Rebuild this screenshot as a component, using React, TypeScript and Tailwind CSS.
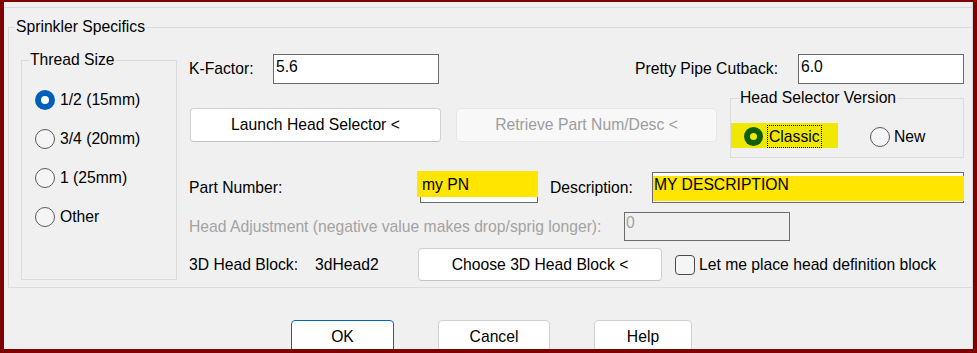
import React from "react";

function Radio({ checked, label }: { checked?: boolean; label: string }) {
  return (
    <div className="flex h-[39px] items-center">
      {checked ? (
        <div className="flex h-[20px] w-[20px] items-center justify-center rounded-full bg-[#005fb8]">
          <div className="h-[8px] w-[8px] rounded-full bg-white" />
        </div>
      ) : (
        <div className="h-[20px] w-[20px] rounded-full border border-[#5a5a5a] bg-[#f5f5f5]" />
      )}
      <span className="ml-[5px] leading-[18px]">{label}</span>
    </div>
  );
}

function Box({
  w,
  h,
  children,
  className = "",
}: {
  w: string;
  h: string;
  children?: React.ReactNode;
  className?: string;
}) {
  return (
    <div className={`${w} ${h} relative shrink-0 border border-[#6b6b6b] ${className}`}>{children}</div>
  );
}

export default function App() {
  return (
    <div className="h-[353px] w-[977px] bg-[#7f0000] pb-[4px] pl-[4px] pr-[4px] pt-[2px] font-['Liberation_Sans',Arial,sans-serif] text-[15.7px] text-black">
      <div className="flex h-full flex-col overflow-hidden border-r border-[#d6d6d6] bg-[#f0f0f0]">
        <div className="mt-[5px] h-px shrink-0 bg-[#dadada]" />

        {/* Sprinkler Specifics group */}
        <div className="relative ml-[4px] mt-[19px] h-[261px] shrink-0 border border-r-0 border-[#dcdcdc]">
          <span className="absolute -top-[10px] left-[6px] bg-[#f0f0f0] px-px leading-[18px]">
            Sprinkler Specifics
          </span>
          <div className="flex">
            {/* Thread Size */}
            <div className="relative ml-[12px] mt-[32px] h-[220px] w-[156px] shrink-0 border border-[#dcdcdc]">
              <span className="absolute -top-[10px] left-[7px] bg-[#f0f0f0] px-px leading-[18px]">
                Thread Size
              </span>
              <div className="flex flex-col pl-[13px] pt-[19px]">
                <Radio checked label="1/2 (15mm)" />
                <Radio label="3/4 (20mm)" />
                <Radio label="1 (25mm)" />
                <Radio label="Other" />
              </div>
            </div>

            {/* Right column */}
            <div className="ml-[12px] flex w-[775px] shrink-0 flex-col pt-[26px]">
              {/* Row 1 */}
              <div className="flex h-[30px] items-center">
                <span className="w-[84px] shrink-0 leading-[18px]">K-Factor:</span>
                <Box w="w-[166px]" h="h-[30px]" className="bg-white px-[2px] pt-[3px] leading-[18px]">
                  5.6
                </Box>
                <div className="flex-1" />
                <span className="leading-[18px]">Pretty Pipe Cutback:</span>
                <Box w="w-[166px]" h="h-[30px]" className="ml-[20px] bg-white px-[2px] pt-[3px] leading-[18px]">
                  6.0
                </Box>
              </div>

              {/* Row 2 */}
              <div className="mt-[14px] flex h-[60px] items-start">
                <button className="ml-px mt-[10px] h-[34px] w-[251px] shrink-0 rounded-[4px] border border-[#d0d0d0] border-b-[#c2c2c2] bg-white leading-[18px]">
                  Launch Head Selector &lt;
                </button>
                <button className="ml-[15px] mt-[10px] h-[34px] w-[261px] shrink-0 rounded-[4px] border border-[#e6e6e6] bg-[#f8f8f8] leading-[18px] text-[#9d9d9d]">
                  Retrieve Part Num/Desc &lt;
                </button>
                <div className="relative ml-[13px] h-[60px] w-[234px] shrink-0 border border-[#dcdcdc]">
                  <span className="absolute -top-[10px] left-[8px] bg-[#f0f0f0] px-px leading-[18px]">
                    Head Selector Version
                  </span>
                  <div className="mt-[24px] flex items-center">
                    <div className="flex h-[25px] w-[107px] shrink-0 items-center bg-[#f0e800] pl-[13px] pt-[2px]">
                      <div className="flex h-[19px] w-[19px] items-center justify-center rounded-full bg-[#0d5e0d]">
                        <div className="h-[7px] w-[7px] rounded-full bg-[#f0e800]" />
                      </div>
                      <span className="ml-[4px] h-[23px] border border-dotted border-black pl-px pr-px leading-[21px]">
                        Classic
                      </span>
                    </div>
                    <div className="ml-[32px] flex items-center pt-[2px]">
                      <div className="h-[20px] w-[20px] rounded-full border border-[#5a5a5a] bg-[#f5f5f5]" />
                      <span className="ml-[4px] leading-[18px]">New</span>
                    </div>
                  </div>
                </div>
              </div>

              {/* Row 3 */}
              <div className="mt-[14px] flex h-[31px] items-center">
                <span className="w-[231px] shrink-0 leading-[18px]">Part Number:</span>
                <Box w="w-[118px]" h="h-[31px]" className="bg-white">
                  <div className="absolute -left-[4px] -top-[2px] h-[26px] w-[121px] bg-[#ffe500]" />
                  <span className="relative block pl-[1px] pt-[3px] leading-[18px]">my PN</span>
                </Box>
                <span className="ml-[12px] w-[102px] shrink-0 leading-[18px]">Description:</span>
                <Box w="w-[312px]" h="h-[31px]" className="bg-white">
                  <div className="absolute left-0 top-[3px] h-[25px] w-[311px] bg-[#ffe500]" />
                  <span className="relative block pl-[1px] pt-[3px] leading-[18px]">MY DESCRIPTION</span>
                </Box>
              </div>

              {/* Row 4 */}
              <div className="mt-[9px] flex h-[29px] items-center">
                <span className="w-[435px] shrink-0 leading-[18px] text-[#a3a3a3]">
                  Head Adjustment (negative value makes drop/sprig longer):
                </span>
                <Box w="w-[166px]" h="h-[29px]" className="pl-[1px] pt-px leading-[18px] text-[#a3a3a3]">
                  0
                </Box>
              </div>

              {/* Row 5 */}
              <div className="mt-[7px] flex h-[33px] items-center">
                <span className="w-[126px] shrink-0 leading-[18px]">3D Head Block:</span>
                <span className="w-[103px] shrink-0 leading-[18px]">3dHead2</span>
                <button className="h-[33px] w-[244px] shrink-0 rounded-[4px] border border-[#d0d0d0] border-b-[#c2c2c2] bg-white leading-[18px]">
                  Choose 3D Head Block &lt;
                </button>
                <div className="ml-[13px] h-[20px] w-[20px] shrink-0 rounded-[4px] border border-[#4a4a4a] bg-[#f5f5f5]" />
                <span className="ml-[4px] leading-[18px]">Let me place head definition block</span>
              </div>
            </div>
          </div>
        </div>

        {/* Bottom buttons */}
        <div className="ml-[287px] mt-[32px] flex shrink-0 gap-[44px]">
          <button className="h-[34px] w-[103px] rounded-[4px] border border-[#0067c0] bg-white leading-[18px]">
            OK
          </button>
          <button className="h-[34px] w-[112px] rounded-[4px] border border-[#d0d0d0] bg-white leading-[18px]">
            Cancel
          </button>
          <button className="h-[34px] w-[98px] rounded-[4px] border border-[#d0d0d0] bg-white leading-[18px]">
            Help
          </button>
        </div>
      </div>
    </div>
  );
}
